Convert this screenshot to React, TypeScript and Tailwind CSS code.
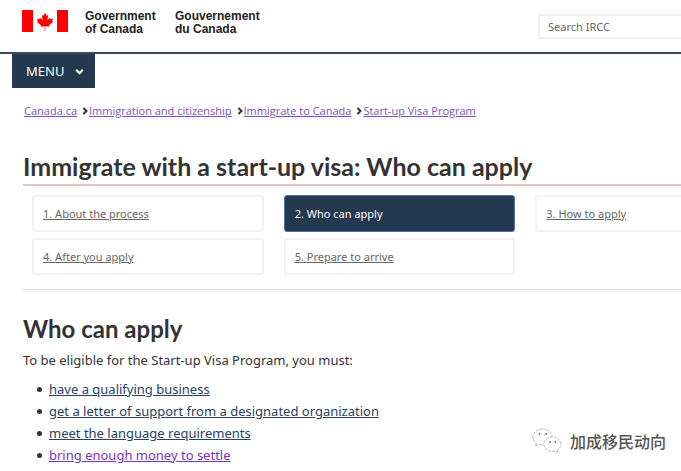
import React from "react";

type Crumb = { label: string };
type Step = { label: string; active?: boolean };
type Requirement = { label: string; visited?: boolean };

const crumbs: Crumb[] = [
  { label: "Canada.ca" },
  { label: "Immigration and citizenship" },
  { label: "Immigrate to Canada" },
  { label: "Start-up Visa Program" },
];

const steps: Step[] = [
  { label: "1. About the process" },
  { label: "2. Who can apply", active: true },
  { label: "3. How to apply" },
  { label: "4. After you apply" },
  { label: "5. Prepare to arrive" },
];

const requirements: Requirement[] = [
  { label: "have a qualifying business" },
  { label: "get a letter of support from a designated organization" },
  { label: "meet the language requirements" },
  { label: "bring enough money to settle", visited: true },
];

function Flag() {
  return (
    <svg viewBox="0 0 46 22" className="h-[22px] w-[46px] shrink-0" aria-label="Canada">
      <path fill="#f00" d="M0 0h11v22H0zM35 0h11v22H35z" />
      <path
        fill="#f00"
        transform="translate(23 11.5) scale(0.0044)"
        d="m-90 2030 45-863a95 95 0 0 0-111-98l-859 151 116-320a65 65 0 0 0-20-73l-941-762 212-99a65 65 0 0 0 34-79l-186-572 542 115a65 65 0 0 0 73-38l105-247 423 454a65 65 0 0 0 111-57l-204-1052 327 189a65 65 0 0 0 91-27l332-652 332 652a65 65 0 0 0 91 27l327-189-204 1052a65 65 0 0 0 111 57l423-454 105 247a65 65 0 0 0 73 38l542-115-186 572a65 65 0 0 0 34 79l212 99-941 762a65 65 0 0 0-20 73l116 320-859-151a95 95 0 0 0-111 98l45 863z"
      />
    </svg>
  );
}

function Chevron({ className }: { className: string }) {
  return (
    <svg viewBox="0 0 8 8" className={className} fill="none" stroke="currentColor" strokeWidth="2" aria-hidden="true">
      <path d="M2.500 1l3 3-3 3" />
    </svg>
  );
}

function ChatLogo() {
  return (
    <svg viewBox="0 0 30 26" className="h-[26px] w-[30px]" fill="#fff" stroke="#bbb" strokeWidth="1" strokeDasharray="3 1" aria-hidden="true">
      <path d="M10.500 1C5.200 1 1 4.500 1 9c0 2.500 1.300 4.600 3.400 6.100L3.500 18l3.400-1.700c1.200.4 2.400.5 3.600.5 5.300 0 9.500-3.500 9.500-7.900S15.800 1 10.500 1z" />
      <path d="M20.500 9c-4.700 0-8.500 3.200-8.500 7.200s3.800 7.200 8.500 7.200c1 0 2-.1 2.900-.4l2.800 1.500-.7-2.500c2.100-1.300 3.500-3.400 3.500-5.800 0-4-3.800-7.200-8.500-7.200z" />
      <g fill="#777" stroke="none">
        <circle cx="7.500" cy="6" r="1" />
        <circle cx="14" cy="6" r="1" />
        <circle cx="18" cy="14" r="1" />
        <circle cx="23.500" cy="14" r="1" />
      </g>
    </svg>
  );
}

export default function App() {
  return (
    <div className="relative overflow-hidden bg-white pb-1 font-['Noto_Sans',sans-serif] text-[#333]">
      <header className="flex h-[54px] items-start border-b-2 border-[#3c4a58] pl-[22px]">
        <div className="flex pt-[10px] font-['Liberation_Sans',sans-serif] text-[12px] leading-[13px] font-bold text-[#222]">
          <Flag />
          <p className="ml-[17px] w-[90px]">
            Government
            <br />
            of Canada
          </p>
          <p>
            Gouvernement
            <br />
            du Canada
          </p>
        </div>
        <input
          type="search"
          aria-label="Search IRCC"
          placeholder="Search IRCC"
          className="mt-[14px] ml-auto h-[25px] w-[143px] border-2 border-r-0 border-[#f0f0f0] bg-white px-2 text-[11px] placeholder:text-[#666] focus:outline-none"
        />
      </header>

      <button
        type="button"
        className="ml-3 flex h-[34px] w-[83px] items-center justify-between bg-[#243850] pt-px pr-[11px] pl-[14px] text-[13px] text-white"
      >
        MENU
        <Chevron className="size-[9px] rotate-90" />
      </button>

      <nav aria-label="Breadcrumb" className="mt-[15px] pl-6">
        <ol className="flex font-['Open_Sans',sans-serif] text-[11px] leading-4 text-[#8250bd]">
          {crumbs.map((crumb, i) => (
            <li key={crumb.label} className="flex items-center">
              {i > 0 && <Chevron className="ml-1 size-2 text-[#333]" />}
              <a href="#" className="underline">
                {crumb.label}
              </a>
            </li>
          ))}
        </ol>
      </nav>

      <main className="pl-[23px]">
        <h1 className="mt-[31px] border-b-2 border-[#e3c4c7] pb-[2px] font-['Lato',sans-serif] text-[25px] leading-8 font-bold">
          Immigrate with a start-up visa: Who can apply
        </h1>

        <nav aria-label="Steps" className="overflow-hidden border-b border-[#ddd] pt-[9px] pb-[14px] pl-[9px]">
          <ul className="grid w-[735px] grid-cols-3 gap-x-5 gap-y-[6px] text-[11px]">
            {steps.map((step) => (
              <li key={step.label}>
                <a
                  href="#"
                  className={
                    step.active
                      ? "flex h-[37px] items-center rounded-[3px] border border-[#4d7396] bg-[#243850] px-[10px] pt-px text-white"
                      : "flex h-[37px] items-center rounded-[3px] border-2 border-[#f2f2f2] px-[9px] pt-px text-[#666] underline"
                  }
                >
                  {step.label}
                </a>
              </li>
            ))}
          </ul>
        </nav>

        <h2 className="mt-[23px] font-['Lato',sans-serif] text-[24px] leading-8 font-bold">Who can apply</h2>
        <p className="mt-1 text-[13px] leading-[22px]">To be eligible for the Start-up Visa Program, you must:</p>
        <ul className="mt-[7px] pl-[14px] text-[13px] leading-[22px]">
          {requirements.map((item) => (
            <li key={item.label} className="flex items-center gap-[7px] before:size-[5px] before:rounded-full before:bg-[#333]">
              <a href="#" className={item.visited ? "text-[#7834bc] underline" : "text-[#284162] underline"}>
                {item.label}
              </a>
            </li>
          ))}
        </ul>
      </main>

      <div className="absolute right-[15px] bottom-4 flex items-center gap-2 font-['Noto_Sans_CJK_SC',sans-serif] text-[16px] leading-6 font-medium text-[#555]">
        <ChatLogo />
        <span>加成移民动向</span>
      </div>
    </div>
  );
}
